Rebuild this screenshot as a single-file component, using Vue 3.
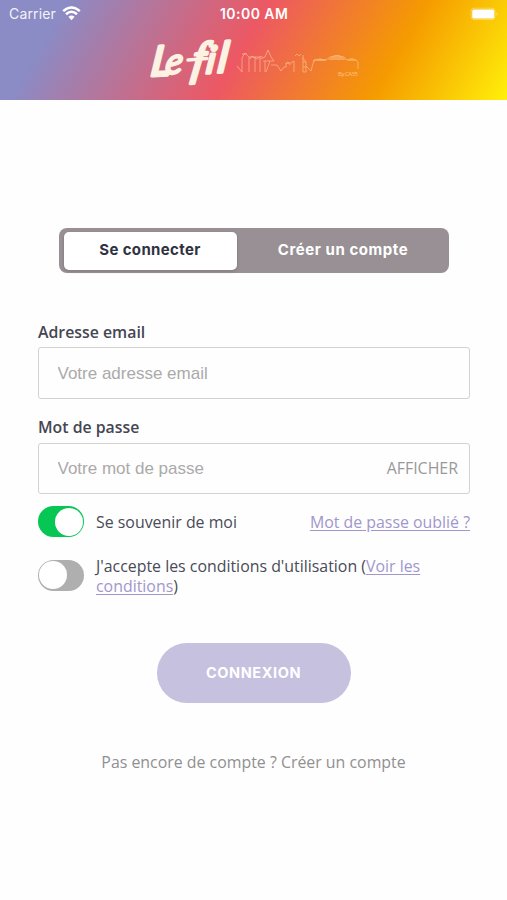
<script setup>
import { ref } from 'vue'

const tab = ref('login')
const remember = ref(true)
const accept = ref(false)
const showPassword = ref(false)
</script>

<template>
  <div class="screen">
    <header class="header">
      <div class="status">
        <span class="carrier">Carrier</span>
        <svg class="wifi" width="19" height="15" viewBox="0 0 19 15">
          <path d="M1.2 5.1Q9.5-2 17.8 5.1" />
          <path d="M4 8.2Q9.5 3.4 15 8.2" />
          <path class="dot" d="M6.4 10.8Q9.5 8.2 12.6 10.8L9.5 14.2Z" />
        </svg>
        <span class="time">10:00 AM</span>
        <svg class="battery" width="30" height="14" viewBox="0 0 30 14">
          <rect class="shell" x="1" y="1.2" width="24" height="11.4" rx="3" />
          <rect class="charge" x="2.2" y="2.6" width="22" height="8.8" rx="1.5" />
          <path class="cap" d="M26.5 5Q29 7 26.5 9Z" />
        </svg>
      </div>
      <svg class="logo" width="220" height="56" viewBox="145 34 220 56">
        <g class="word" transform="translate(151 76) rotate(-3) skewX(-10)">
          <text><tspan class="sans narrow" x="-1" y="0">L</tspan><tspan class="small" x="13.5" y="-1">e</tspan><tspan class="serif" x="40" y="0">f</tspan><tspan class="mid" x="54.5" y="0">i</tspan><tspan class="sans" x="66" y="0">l</tspan></text>
        </g>
        <path class="joint" d="M188 60L207 58.500" />
        <g class="skyline">
          <path d="M237 66L242 72V58L245 53L249 57V72M249 57H255V72M255 57H260V72M242 54H247M250 59L252 56L257 59L261 56L263 58" />
          <path d="M260 59L265 57L268 50L271 57L274 61H263M265 61V72M270 61L266 72M271 65H277L281 71L284 67H286V63H291L294 61V72M286 64L288 62L290 65" />
          <path d="M295 56L297 54L299 56L301 54M303 55V72M303 58L306 62V72H303M306 66L311 71L314 60H326M303 62H306M303 67H306" />
          <path d="M314 62V60Q319 58 326 60L330 57Q337 54 344 57L347 60Q354 57 358 62V69" />
          <path class="roof" d="M328 60Q337 50 346 60ZM316 61Q320 56 326 61ZM347 61Q352 56 357 61Z" />
        </g>
        <text class="by" x="338" y="75.5" textLength="20">By CA35</text>
      </svg>
    </header>

    <main class="content">
      <nav class="tabs">
        <button class="tab" :class="{ active: tab === 'login' }" @click="tab = 'login'">Se connecter</button>
        <button class="tab create" :class="{ active: tab === 'create' }" @click="tab = 'create'">Créer un compte</button>
      </nav>

      <form class="form" @submit.prevent>
        <label class="label" for="email">Adresse email</label>
        <div class="field"><input id="email" type="email" placeholder="Votre adresse email"></div>
        <label class="label second" for="password">Mot de passe</label>
        <div class="field">
          <input id="password" :type="showPassword ? 'text' : 'password'" placeholder="Votre mot de passe">
          <button class="show" type="button" @click="showPassword = !showPassword">AFFICHER</button>
        </div>
        <div class="row">
          <button class="switch" type="button" :class="{ on: remember }" @click="remember = !remember"><span class="knob"></span></button>
          <span class="remember">Se souvenir de moi</span>
          <a class="link forgot">Mot de passe oublié ?</a>
        </div>
        <div class="row terms">
          <button class="switch" type="button" :class="{ on: accept }" @click="accept = !accept"><span class="knob"></span></button>
          <p class="agreement">J'accepte les conditions d'utilisation (<a class="link">Voir les<br>conditions</a>)</p>
        </div>
        <button class="submit">CONNEXION</button>
      </form>
      <p class="signup">Pas encore de compte ? Créer un compte</p>
    </main>
  </div>
</template>

<style>
body { background: #fefefe; }
</style>

<style scoped>
* { box-sizing: border-box; }
.screen { width: 507px; height: 900px; overflow: hidden; background: #fefefe; font-family: "Open Sans", sans-serif; color: #494b57; }
button { border: 0; padding: 0; background: none; font: inherit; }
p { margin: 0; }
.header { height: 99.5px; background: linear-gradient(120deg, #8b8bc5 12%, #ed5863 48%, #f59b00 76%, #fff00a 100%); }
.status { height: 28px; display: flex; align-items: center; padding-left: 9px; font-family: Inter, sans-serif; font-size: 14px; color: #fff; }
.carrier { width: 53px; letter-spacing: .15px; margin-top: -1px; opacity: .9; }
.wifi { fill: none; stroke: #fff; stroke-width: 2.5; margin-top: -1px; }
.wifi .dot { fill: #fff; stroke: none; }
.time { margin-left: 139px; margin-top: -1px; width: 69px; font-weight: 600; letter-spacing: .45px; white-space: nowrap; }
.battery { margin-left: 181px; margin-top: -1px; }
.shell { fill: none; stroke: #fff; stroke-opacity: .35; }
.charge { fill: #fff; }
.cap { fill: #fff; fill-opacity: .4; }
.logo { display: block; overflow: visible; margin: 6px 0 0 145px; }
.word { fill: #fbf2e3; stroke: #fbf2e3; stroke-width: 3.2; stroke-linejoin: round; }
.sans { font: italic 400 42px Lato, sans-serif; }
.sans.narrow { font-size: 41px; }
.mid { font: italic 400 37px Lato, sans-serif; }
.small { font: italic 400 36px Lato, sans-serif; stroke-width: 2.2; }
.serif { font: italic 400 45px "Liberation Serif", serif; }
.joint { fill: none; stroke: #fbf2e3; stroke-width: 3.5; stroke-linecap: round; }
.skyline { fill: none; stroke: #ffd9a5; stroke-width: .8; opacity: .65; }
.skyline .roof { fill: #ffd9a5; fill-opacity: .6; stroke: none; }
.by { font: 6px "Open Sans", sans-serif; fill: #ffd9a5; opacity: .75; }
.content { display: flex; flex-direction: column; align-items: center; padding-top: 128px; }
.tabs { width: 390px; height: 45px; padding: 4px 4px 3px 5px; border-radius: 8px; background: #989094; display: flex; font-family: Inter, sans-serif; }
.tab { width: 173px; border-radius: 5px; font-size: 15px; font-weight: 700; letter-spacing: .35px; padding-bottom: 2px; color: #fff; }
.tab.create { flex: 1; padding-left: 5px; letter-spacing: .55px; }
.tab.active { background: #fff; color: #303241; box-shadow: 0 1px 2px 1px #8a8386; }
.form { width: 433px; margin-top: 47px; display: flex; flex-direction: column; }
.label { height: 27.5px; line-height: 24px; padding-left: 1px; font-size: 15.85px; font-weight: 600; color: #454653; }
.label.second { margin-top: 16.5px; }
.field { height: 51.5px; margin-left: .5px; border: 1.5px solid #d2d2d2; border-radius: 3px; display: flex; align-items: center; padding: 1px 11px 0 19px; }
.field input { flex: 1; min-width: 0; border: 0; padding: 1px 0 0; outline: none; background: none; font: 17px "Liberation Sans", sans-serif; color: #494b57; }
.field input::placeholder { color: #aaa; opacity: 1; }
.show { font-size: 15.9px; color: #999; padding-bottom: 2px; }
.row { display: flex; align-items: center; height: 31px; margin-top: 12px; font-size: 15.9px; }
.switch { flex: none; width: 46.5px; height: 31px; margin-left: .5px; padding: 1.5px; border-radius: 16px; background: #b0afb0; display: flex; }
.switch.on { background: #06c754; justify-content: flex-end; }
.knob { width: 28px; height: 28px; border-radius: 50%; background: #fff; }
.remember { margin-left: 12px; }
.link { color: #a197cc; text-decoration: underline; text-underline-offset: 2px; }
.forgot { margin-left: auto; }
.row.terms { height: 42px; margin-top: 17px; }
.agreement { margin-left: 12px; padding-top: 1px; line-height: 20px; }
.submit { align-self: center; width: 194px; height: 60px; margin-top: 47px; border-radius: 30px; background: #c5c1df; color: #fff; font: 700 14.5px Inter, sans-serif; letter-spacing: .6px; padding-bottom: 1px; }
.signup { margin-top: 48px; font-size: 15.9px; line-height: 22px; color: #909090; }
</style>
